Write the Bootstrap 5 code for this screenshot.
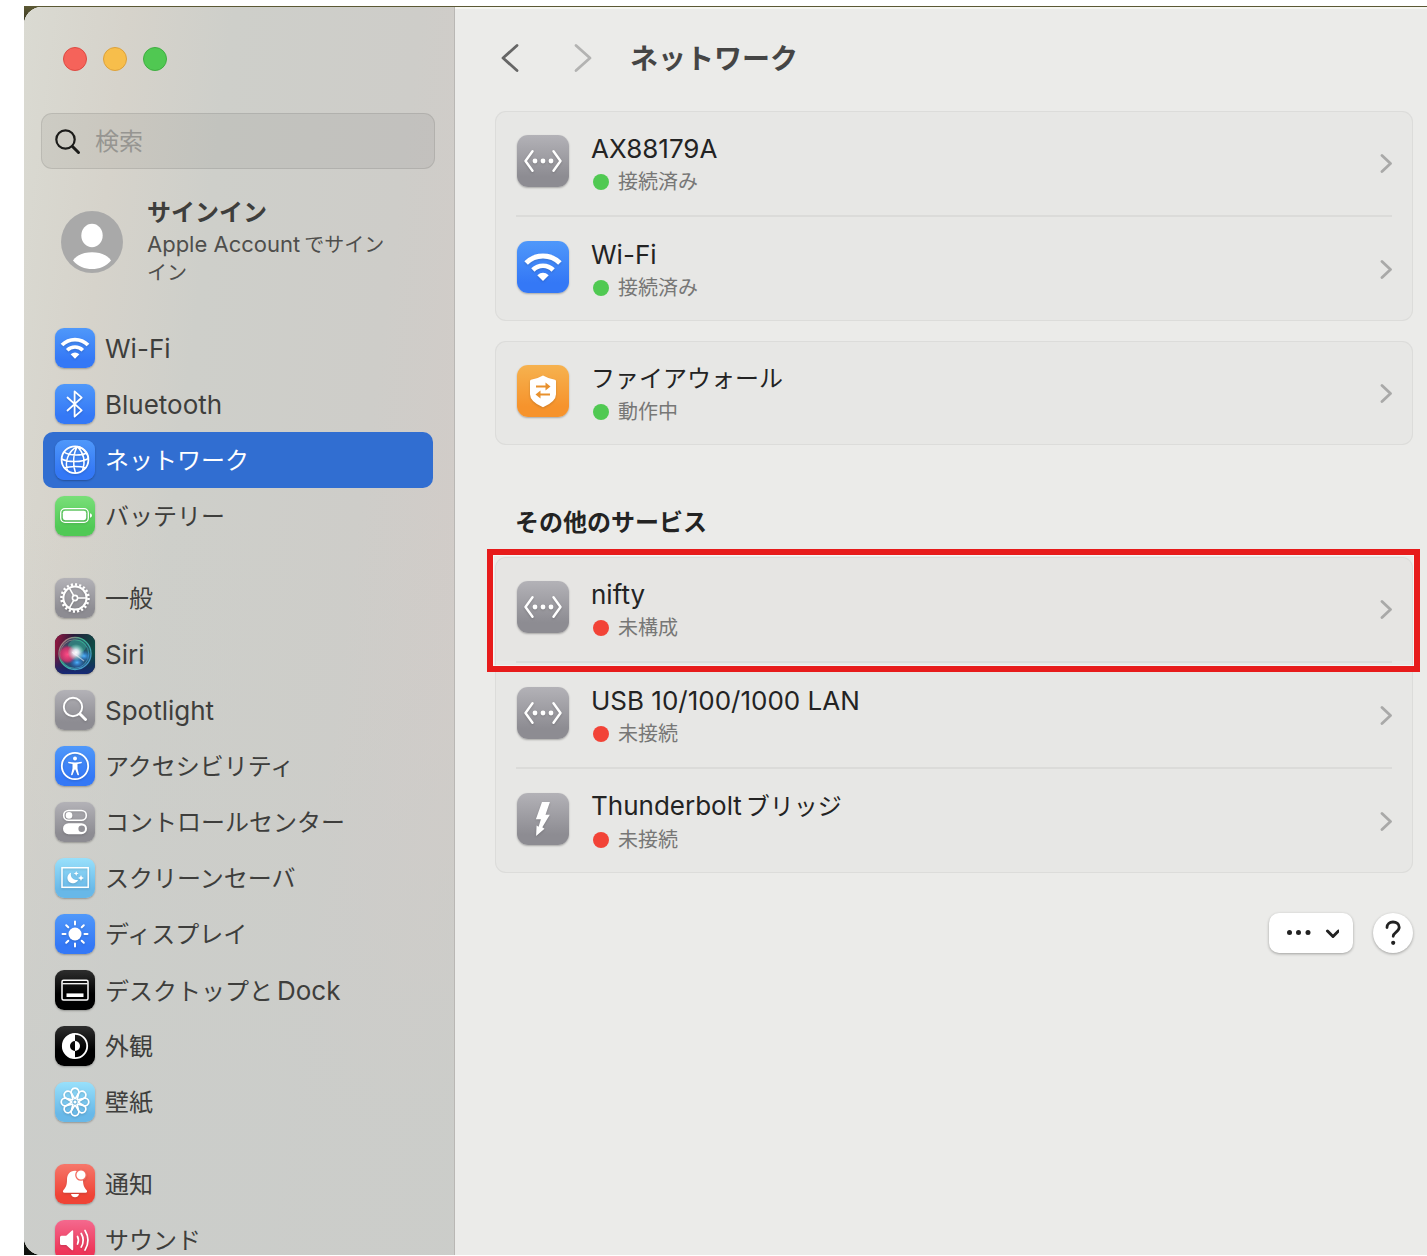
<!DOCTYPE html>
<html lang="ja">
<head>
<meta charset="utf-8">
<meta name="viewport" content="width=device-width, initial-scale=1">
<title>ネットワーク</title>
<link href="https://cdn.jsdelivr.net/npm/bootstrap@5.3.0/dist/css/bootstrap.min.css" rel="stylesheet">
<style>
body{font-family:Inter,"Noto Sans CJK JP",sans-serif;font-size:24px;line-height:32px;color:#232323;background:#fff}
.desktop{height:100vh;padding:6px 0 1px 24px}
.backdrop{background:linear-gradient(#5d5a35,#2c2a1a 20px,#10130f 90%);padding-top:1px}
.win{border-radius:18px 0 0 18px;overflow:hidden;background:#ebebe9;box-shadow:inset 0 2px 0 #f6f6f1}
.side{width:431px;flex:none;padding:40px 19px 0 17px;border-right:1px solid #b9b7b4;color:#3e3e3c;overflow-y:auto;scrollbar-width:none;
 background:linear-gradient(180deg,rgba(203,205,202,0) 40%,rgba(203,205,202,.9) 90%),linear-gradient(97deg,#dadad2 0,#d6d3cb 18%,#cecfca 36%,#cecdc9 68%,#d2ccc8 88%,#d0ccc7)}
.side::-webkit-scrollbar{display:none}
.lights{gap:16px;padding-left:22px;margin-bottom:42px}
.light{width:24px;height:24px;border-radius:50%;border:1px solid;padding:0}
.l-red{background:#f5635a;border-color:#dd4a42}.l-yel{background:#f7be4b;border-color:#dca13b}.l-grn{background:#50c852;border-color:#3fae41}
.find{height:56px;border:1px solid rgba(0,0,0,.09);border-radius:11px;background:rgba(0,0,0,.055);padding:2px 0 0 12px;gap:13px}
.find input{background:none;border:0;outline:0;padding:0;min-width:0;color:inherit}
.find input::placeholder{color:#969591;opacity:1}
.acct{padding:26px 0 0 20px;gap:24px;color:inherit}
.acct-name{font-weight:600;line-height:35px}
.acct-sub{font-size:20px;line-height:28px;color:#4e4e4c;width:242px}
.latin-s{font-size:22px}
.latin{font-size:26px}
.avatar{width:62px;height:62px;margin-top:16px}
.menu{margin:0 2px;padding-top:33px}
.menu li+.group{margin-top:26px}
.menu a{height:56px;padding-left:12px;gap:10px;color:inherit;border-radius:10px}
.menu a>span:last-child{padding-top:2px}
.menu a.active{background:#316ed1;color:#fff}
.tile{width:40px;height:40px;border-radius:9px;flex:none;box-shadow:0 1px 2px rgba(0,0,0,.28);color:#fff}
.tile svg{width:100%;height:100%;display:block;filter:drop-shadow(0 1px 1px rgba(0,0,0,.16))}
.t-blue{background:linear-gradient(#4f98fa,#3478f6 80%)}
.t-green{background:linear-gradient(#79df79,#50c955 80%)}
.t-gray{background:linear-gradient(#b3b2b7,#8d8c92 80%)}
.t-sky{background:linear-gradient(#98e0fb,#68b8e8 80%)}
.t-black{background:linear-gradient(#2e2e2e,#000 60%)}
.t-red{background:linear-gradient(#f6776b,#ef4335 80%)}
.t-pink{background:linear-gradient(#f4698e,#ee3558 80%)}
.t-orange{background:linear-gradient(#f6b24f,#f6932c 80%)}
.t-siri{background:#161432}
.pane{padding:33px 14px 0 40px;overflow-y:auto;scrollbar-width:none}
.bar{height:36px;margin-bottom:35px}
.bar button,.tools button{border:0;padding:0}
.bar button{background:none;width:30px;height:36px;color:#666;display:flex;align-items:center;justify-content:center}
.bar button:disabled{color:#b3b3b2}
.bar .fwd{margin-left:43px}
.bar h1{font-size:28px;line-height:36px;font-weight:600;color:#454545;margin:2px 0 0 32px}
.panel{box-shadow:inset 0 0 0 1px #dcdcda;border-radius:11px;background:#e7e7e5;padding:0 21px;margin-bottom:20px}
.panel li+li{border-top:2px solid #dbdbd9}
.panel a{height:104px;color:inherit}
.panel .tile{width:52px;height:52px;border-radius:11px;margin:0 22px 4px 1px}
.svc{padding-top:4px;gap:1px}
.stat{font-size:20px;line-height:32px;color:#777776;gap:9px;padding-left:2px}
.dot{width:16px;height:16px;border-radius:50%;background:#50c952}
.dot.off{background:#f24337}
.sec{font-size:24px;line-height:32px;font-weight:600;margin:62px 0 18px 20px}
.marked{z-index:0}
.marked::before{content:"";position:absolute;inset:1px -20px 0 -20px;border-radius:11px 11px 0 0;background:#e6e5e3;z-index:-1}
.marked::after{content:"";position:absolute;inset:-8px -28px -11px -29px;border:6px solid #e71b1b;box-shadow:inset 0 0 0 1px rgba(255,255,255,.5);pointer-events:none;z-index:2}
.tools{gap:20px;margin-top:40px;padding-bottom:20px}
.tools button{height:40px;background:#fff;box-shadow:0 1px 3px rgba(0,0,0,.32);color:#222}
.more{width:84px;border-radius:10px}
.help{width:40px;border-radius:50%}
svg{display:block}
</style>
<script src="https://cdn.jsdelivr.net/npm/bootstrap@5.3.0/dist/js/bootstrap.bundle.min.js"></script>
</head>
<body>
<svg width="0" height="0" class="position-absolute" aria-hidden="true">
<defs>
<radialGradient id="sg1"><stop offset="0" stop-color="#fff"/><stop offset=".35" stop-color="#f0f4ff" stop-opacity=".85"/><stop offset="1" stop-color="#9fd" stop-opacity="0"/></radialGradient>
<radialGradient id="sg2"><stop offset="0" stop-color="#ff4d86"/><stop offset=".7" stop-color="#e0306c" stop-opacity=".8"/><stop offset="1" stop-color="#c02060" stop-opacity="0"/></radialGradient>
<radialGradient id="sg3"><stop offset="0" stop-color="#4fb4ff"/><stop offset="1" stop-color="#2060d0" stop-opacity="0"/></radialGradient>
<linearGradient id="sbg" x2="1" y2=".2"><stop offset="0" stop-color="#9c1740"/><stop offset=".45" stop-color="#2a1c3c"/><stop offset="1" stop-color="#0d4b45"/></linearGradient>
<linearGradient id="sbg2" x2="0" y2="1"><stop offset=".5" stop-color="#10205c" stop-opacity="0"/><stop offset="1" stop-color="#172a78"/></linearGradient>
<linearGradient id="sring" x2="1" y2="1"><stop offset="0" stop-color="#e0607a"/><stop offset=".4" stop-color="#38b890"/><stop offset="1" stop-color="#4a90e0"/></linearGradient>
<symbol id="wifi" viewBox="0 0 40 40"><g fill="none" stroke="currentColor"><path stroke-width="3.8" d="M7 17A18.2 18.2 0 0 1 33 17"/><path stroke-width="3.6" d="M12.2 22.3A11 11 0 0 1 27.8 22.3"/></g><path fill="currentColor" d="M20 30.7l-4.4-4.4q4.4-3.8 8.8 0z"/></symbol>
<symbol id="eth" viewBox="0 0 52 52"><g fill="none" stroke="currentColor" stroke-width="2.4" stroke-linecap="round" stroke-linejoin="round"><path d="M15.500 16.300L8.500 26l7 9.700M36.500 16.300l7 9.700-7 9.700"/></g><g fill="currentColor"><circle cx="18" cy="26" r="2.400"/><circle cx="26" cy="26" r="2.400"/><circle cx="34" cy="26" r="2.400"/></g></symbol>
<symbol id="chev" viewBox="0 0 12 20"><path d="M2 2.500L10.500 10.500l-8.500 8" fill="none" stroke="currentColor" stroke-width="2.800" stroke-linecap="round" stroke-linejoin="round"/></symbol>
</defs>
</svg>
<div class="desktop">
<div class="backdrop h-100">
<div class="win d-flex h-100">
<aside class="side">
  <div class="lights d-flex">
    <button class="light l-red" type="button" aria-label="閉じる"></button>
    <button class="light l-yel" type="button" aria-label="しまう"></button>
    <button class="light l-grn" type="button" aria-label="拡大"></button>
  </div>
  <div class="find d-flex align-items-center">
    <label for="q" aria-label="検索"><svg width="28" height="28" viewBox="0 0 28 28" fill="none" stroke="#1c1c1a" stroke-linecap="round"><circle cx="11.500" cy="11.500" r="9.200" stroke-width="2.200"/><path d="M18.500 18.500l6 6" stroke-width="3"/></svg></label>
    <input id="q" type="search" class="flex-grow-1" placeholder="検索">
  </div>
  <a href="#" class="acct d-flex text-decoration-none">
    <svg class="avatar flex-shrink-0" viewBox="0 0 62 62"><circle cx="31" cy="31" r="31" fill="#a9a9a9"/><ellipse cx="31" cy="24.500" rx="10.700" ry="11.700" fill="#fff"/><path d="M12 49.500C16 43.500 24 41.300 31 41.300s15 2.200 19 8.200C45.500 55.500 38 58 31 58s-14.500-2.500-19-8.500z" fill="#fff"/></svg>
    <div><div class="acct-name">サインイン</div><div class="acct-sub"><span class="latin-s me-1">Apple Account</span>でサインイン</div></div>
  </a>
  <ul class="menu list-unstyled">
    <li><a href="#" class="d-flex align-items-center text-decoration-none"><span class="tile t-blue"><svg><use href="#wifi"/></svg></span><span class="latin">Wi-Fi</span></a></li>
    <li><a href="#" class="d-flex align-items-center text-decoration-none"><span class="tile t-blue"><svg viewBox="0 0 40 40" fill="none" stroke="#fff" stroke-width="1.800" stroke-linejoin="round" stroke-linecap="round"><path d="M12.500 13.500L26.700 26.300 19.600 32.600V7.400L26.700 13.700 12.500 26.500"/></svg></span><span class="latin">Bluetooth</span></a></li>
    <li><a href="#" class="active d-flex align-items-center text-decoration-none" aria-current="page"><span class="tile t-blue"><svg viewBox="0 0 40 40" fill="none" stroke="#fff" stroke-width="1.500"><circle cx="20" cy="19.700" r="13.400" stroke-width="1.800"/><path d="M22.500 6.500C13 11 9.500 22 12.500 30.500M22.500 6.500C18 13 17.500 25 20.500 33M22.500 6.500C28.500 13 30.500 22 27.500 30.500M24 6.800C30 9.500 33 15 33.200 18M9 12.200C15 16 27 15.500 31.500 13M6.800 19C13 22.500 27 22.500 33.300 18.500M9.500 28C15 25.800 25 26 30.800 27.700"/></svg></span><span>ネットワーク</span></a></li>
    <li><a href="#" class="d-flex align-items-center text-decoration-none"><span class="tile t-green"><svg viewBox="0 0 40 40"><rect x="5.700" y="12.700" width="27.600" height="13.600" rx="4.300" fill="none" stroke="#fff" stroke-width="1.300"/><rect x="7.800" y="14.800" width="23.400" height="9.400" rx="2.400" fill="#fff"/><path d="M35 17.300q2 .5 2 2.200t-2 2.200z" fill="#fff"/></svg></span><span>バッテリー</span></a></li>
    <li class="group"><a href="#" class="d-flex align-items-center text-decoration-none"><span class="tile t-gray"><svg viewBox="0 0 40 40" fill="none" stroke="#fff"><circle cx="20" cy="20" r="13.500" stroke-width="2.600" pathLength="40" stroke-dasharray="1 1"/><circle cx="20" cy="20" r="11.600" stroke-width="2"/><circle cx="20" cy="20" r="2.600" stroke-width="1.600"/><path stroke-width="1.600" d="M22.600 20h8.500M18.700 17.700l-4.300-7.500M18.700 22.300l-4.300 7.500"/></svg></span><span>一般</span></a></li>
    <li><a href="#" class="d-flex align-items-center text-decoration-none"><span class="tile t-siri overflow-hidden"><svg viewBox="0 0 40 40"><path fill="url(#sbg)" d="M0 0h40v40H0z"/><path fill="url(#sbg2)" d="M0 0h40v40H0z"/><circle cx="20" cy="19.500" r="15.500" fill="#3a7a90" fill-opacity=".45"/><circle cx="20" cy="19.500" r="16" fill="none" stroke="url(#sring)" stroke-width="1.300"/><circle cx="19.500" cy="20" r="14.300" fill="none" stroke="url(#sring)" stroke-width=".8"/><ellipse cx="22" cy="12.500" rx="9" ry="7" fill="#35b99a" fill-opacity=".45"/><circle cx="12.500" cy="20.500" r="9.500" fill="url(#sg2)"/><ellipse cx="29" cy="22" rx="8" ry="6" fill="url(#sg3)"/><ellipse cx="22" cy="28.500" rx="8" ry="6" fill="url(#sg3)"/><circle cx="21" cy="18.500" r="8.500" fill="url(#sg1)"/><path d="M17 18l12 9" stroke="#fff" stroke-opacity=".5" stroke-width="1.200"/></svg></span><span class="latin">Siri</span></a></li>
    <li><a href="#" class="d-flex align-items-center text-decoration-none"><span class="tile t-gray"><svg viewBox="0 0 40 40" fill="none" stroke="#fff" stroke-linecap="round"><circle cx="18" cy="17" r="9.200" stroke-width="1.900"/><path stroke-width="2.900" d="M25.300 24.300l5.200 5.200"/></svg></span><span class="latin">Spotlight</span></a></li>
    <li><a href="#" class="d-flex align-items-center text-decoration-none"><span class="tile t-blue"><svg viewBox="0 0 40 40"><circle cx="20" cy="20" r="13.200" fill="none" stroke="#fff" stroke-width="1.800"/><circle cx="20" cy="12.600" r="2" fill="#fff"/><path d="M13.500 15.700q6.500 1.400 13 0 .8.900-.1 1.500l-3.900.9v4.500l1.500 6.200q-.6 1-1.500.2L20.300 23.500h-.6L17.500 29q-.9.800-1.500-.2l1.500-6.200v-4.500l-3.900-.9q-.9-.6-.1-1.500z" fill="#fff"/></svg></span><span>アクセシビリティ</span></a></li>
    <li><a href="#" class="d-flex align-items-center text-decoration-none"><span class="tile t-gray"><svg viewBox="0 0 40 40"><rect x="8.700" y="8.500" width="22.600" height="9.800" rx="4.900" fill="none" stroke="#fff" stroke-width="1.600"/><circle cx="14" cy="13.400" r="3.300" fill="#fff"/><rect x="8" y="21.200" width="24" height="11" rx="5.500" fill="#fff"/><circle cx="26.700" cy="26.700" r="3.300" fill="#929197"/></svg></span><span>コントロールセンター</span></a></li>
    <li><a href="#" class="d-flex align-items-center text-decoration-none"><span class="tile t-sky"><svg viewBox="0 0 40 40"><rect x="7" y="9.700" width="26.200" height="19.600" fill="none" stroke="#fff" stroke-width="1.500"/><path d="M16 14.700a5.500 5.500 0 1 0 7 7.200 5.800 5.800 0 0 1-7-7.200z" fill="#fff"/><path d="M21.200 13l.7 1.800 1.800.7-1.800.7-.7 1.800-.7-1.800-1.800-.7 1.800-.7zM26 17l.9 2.100 2.100.9-2.100.9L26 23l-.9-2.100L23 20l2.100-.9z" fill="#fff"/></svg></span><span>スクリーンセーバ</span></a></li>
    <li><a href="#" class="d-flex align-items-center text-decoration-none"><span class="tile t-blue"><svg viewBox="0 0 40 40"><circle cx="20" cy="20" r="6.500" fill="#fff"/><path d="M20 7.500v3M20 29.500v3M7.500 20h3M29.500 20h3M11.200 11.200l2.100 2.100M26.700 26.700l2.100 2.100M11.200 28.800l2.100-2.100M26.700 13.300l2.100-2.100" stroke="#fff" stroke-width="2" stroke-linecap="round"/></svg></span><span>ディスプレイ</span></a></li>
    <li><a href="#" class="d-flex align-items-center text-decoration-none"><span class="tile t-black"><svg viewBox="0 0 40 40" fill="none" stroke="#fff"><rect x="7" y="10.300" width="26" height="19.600" rx="1.500" stroke-width="1.500"/><path d="M7.500 13.700h25" stroke-width="1.300"/><path d="M11.500 25.200h17" stroke-width="3.600"/></svg></span><span>デスクトップと<span class="latin ms-1">Dock</span></span></a></li>
    <li><a href="#" class="d-flex align-items-center text-decoration-none"><span class="tile t-black"><svg viewBox="0 0 40 40"><circle cx="20" cy="20" r="12.200" fill="none" stroke="#fff" stroke-width="1.800"/><path d="M20 7.500a12.500 12.500 0 0 0 0 25v-7.500a5 5 0 0 1 0-10z" fill="#fff"/><path d="M20 15a5 5 0 0 1 0 10z" fill="#fff"/></svg></span><span>外観</span></a></li>
    <li><a href="#" class="d-flex align-items-center text-decoration-none"><span class="tile t-sky"><svg viewBox="0 0 40 40" fill="none" stroke="#fff" stroke-width="1.700"><g id="pet"><path id="p1" d="M18 18L16.600 12A3.900 3.900 0 1 1 23.400 12L22 18"/><use href="#p1" transform="rotate(45 20 20)"/><use href="#p1" transform="rotate(90 20 20)"/><use href="#p1" transform="rotate(135 20 20)"/></g><use href="#pet" transform="rotate(180 20 20)"/><circle cx="20" cy="20" r="1.500" fill="#fff" stroke="none"/></svg></span><span>壁紙</span></a></li>
    <li class="group"><a href="#" class="d-flex align-items-center text-decoration-none"><span class="tile t-red"><svg viewBox="0 0 40 40"><path d="M20 6.800c-5.500 0-8 4-8 9 0 6-1.500 8-3.500 10.200-1.200 1.500-.5 2.800 1 2.800h21c1.500 0 2.200-1.300 1-2.800-2-2.200-3.500-4.200-3.500-10.200 0-5-2.500-9-8-9zM16 30h8q-.8 3.300-4 3.300T16 30z" fill="#fff"/><circle cx="26" cy="11" r="5.200" fill="#fff" stroke="#f36a5e" stroke-width="1.300"/></svg></span><span>通知</span></a></li>
    <li><a href="#" class="d-flex align-items-center text-decoration-none"><span class="tile t-pink"><svg viewBox="0 0 40 40"><path d="M6.500 15.700h4.700l5.500-5q1.500-1.200 1.500.7v17.800q0 1.900-1.500.7l-5.500-5H6.500q-1.500 0-1.500-1.500v-6.200q0-1.500 1.500-1.500z" fill="#fff"/><path d="M22.500 16.500q2 3.800 0 7.600M26.200 13.500q4 6.800 0 13.600M30 10.500q6 9.800 0 19.600" fill="none" stroke="#fff" stroke-width="1.700" stroke-linecap="round"/></svg></span><span>サウンド</span></a></li>
  </ul>
</aside>
<main class="pane flex-grow-1">
  <div class="bar d-flex align-items-center">
    <button type="button" aria-label="戻る"><svg width="18" height="30" viewBox="0 0 18 30" fill="none" stroke="currentColor" stroke-width="2.800" stroke-linecap="round" stroke-linejoin="round"><path d="M16 2.500L2 15l14 12.500"/></svg></button>
    <button type="button" class="fwd" disabled aria-label="進む"><svg width="18" height="30" viewBox="0 0 18 30" fill="none" stroke="currentColor" stroke-width="2.800" stroke-linecap="round" stroke-linejoin="round"><path d="M2 2.500L16 15 2 27.500"/></svg></button>
    <h1>ネットワーク</h1>
  </div>
  <ul class="panel list-unstyled">
    <li><a href="#" class="d-flex align-items-center text-decoration-none"><span class="tile t-gray"><svg><use href="#eth"/></svg></span><span class="svc d-flex flex-column flex-grow-1"><span class="latin">AX88179A</span><span class="stat d-flex align-items-center"><i class="dot"></i>接続済み</span></span><svg width="12" height="20" color="#a9a9a8"><use href="#chev"/></svg></a></li>
    <li><a href="#" class="d-flex align-items-center text-decoration-none"><span class="tile t-blue"><svg><use href="#wifi"/></svg></span><span class="svc d-flex flex-column flex-grow-1"><span class="latin">Wi-Fi</span><span class="stat d-flex align-items-center"><i class="dot"></i>接続済み</span></span><svg width="12" height="20" color="#a9a9a8"><use href="#chev"/></svg></a></li>
  </ul>
  <ul class="panel list-unstyled">
    <li><a href="#" class="d-flex align-items-center text-decoration-none"><span class="tile t-orange"><svg viewBox="0 0 52 52"><path d="M26 10.500q6 3.500 12 4.200 1 .2 1 1.500v13q0 7.500-13 13-13-5.500-13-13v-13q0-1.300 1-1.500 6-.700 12-4.200z" fill="#fff"/><path d="M19 21.500h11M33 29.500H22" stroke="#e8912e" stroke-width="2"/><path d="M28.500 17.500l5 4-5 4zM23.500 25.500l-5 4 5 4z" fill="#e8912e"/></svg></span><span class="svc d-flex flex-column flex-grow-1"><span>ファイアウォール</span><span class="stat d-flex align-items-center"><i class="dot"></i>動作中</span></span><svg width="12" height="20" color="#a9a9a8"><use href="#chev"/></svg></a></li>
  </ul>
  <h2 class="sec">その他のサービス</h2>
  <ul class="panel list-unstyled mb-0">
    <li class="marked position-relative"><a href="#" class="d-flex align-items-center text-decoration-none"><span class="tile t-gray"><svg><use href="#eth"/></svg></span><span class="svc d-flex flex-column flex-grow-1"><span class="latin">nifty</span><span class="stat d-flex align-items-center"><i class="dot off"></i>未構成</span></span><svg width="12" height="20" color="#a9a9a8"><use href="#chev"/></svg></a></li>
    <li><a href="#" class="d-flex align-items-center text-decoration-none"><span class="tile t-gray"><svg><use href="#eth"/></svg></span><span class="svc d-flex flex-column flex-grow-1"><span class="latin">USB 10/100/1000 LAN</span><span class="stat d-flex align-items-center"><i class="dot off"></i>未接続</span></span><svg width="12" height="20" color="#a9a9a8"><use href="#chev"/></svg></a></li>
    <li><a href="#" class="d-flex align-items-center text-decoration-none"><span class="tile t-gray"><svg viewBox="0 0 52 52"><path d="M25 9h7.900l-4.400 12.700h4.300L25.300 34.200l2.200 1.500-8.400 7.200.5-10.500 2 1.300 2.300-7.400h-5z" fill="#fff"/></svg></span><span class="svc d-flex flex-column flex-grow-1"><span><span class="latin me-1">Thunderbolt</span>ブリッジ</span><span class="stat d-flex align-items-center"><i class="dot off"></i>未接続</span></span><svg width="12" height="20" color="#a9a9a8"><use href="#chev"/></svg></a></li>
  </ul>
  <div class="tools d-flex justify-content-end">
    <button type="button" class="more d-flex align-items-center justify-content-center" aria-label="その他の操作"><svg width="56" height="20" viewBox="0 0 56 20"><g fill="#222"><circle cx="6.500" cy="9.500" r="2.500"/><circle cx="15.500" cy="9.500" r="2.500"/><circle cx="25" cy="9.500" r="2.500"/></g><path d="M44.500 8l5.500 5.500L55.500 8" transform="translate(0 0)" fill="none" stroke="#222" stroke-width="3" stroke-linecap="round" stroke-linejoin="round" class="overflow-visible"/></svg></button>
    <button type="button" class="help d-flex align-items-center justify-content-center" aria-label="ヘルプ"><svg width="16" height="26" viewBox="0 0 16 26"><path d="M2 7.500C2 4 4.500 2 8 2s6.200 2 6.200 5.300c0 4.700-6 4.700-6 9" fill="none" stroke="#222" stroke-width="2.800" stroke-linecap="round"/><circle cx="8.200" cy="22.800" r="2.100" fill="#222"/></svg></button>
  </div>
</main>
</div>
</div>
</div>
</body>
</html>
